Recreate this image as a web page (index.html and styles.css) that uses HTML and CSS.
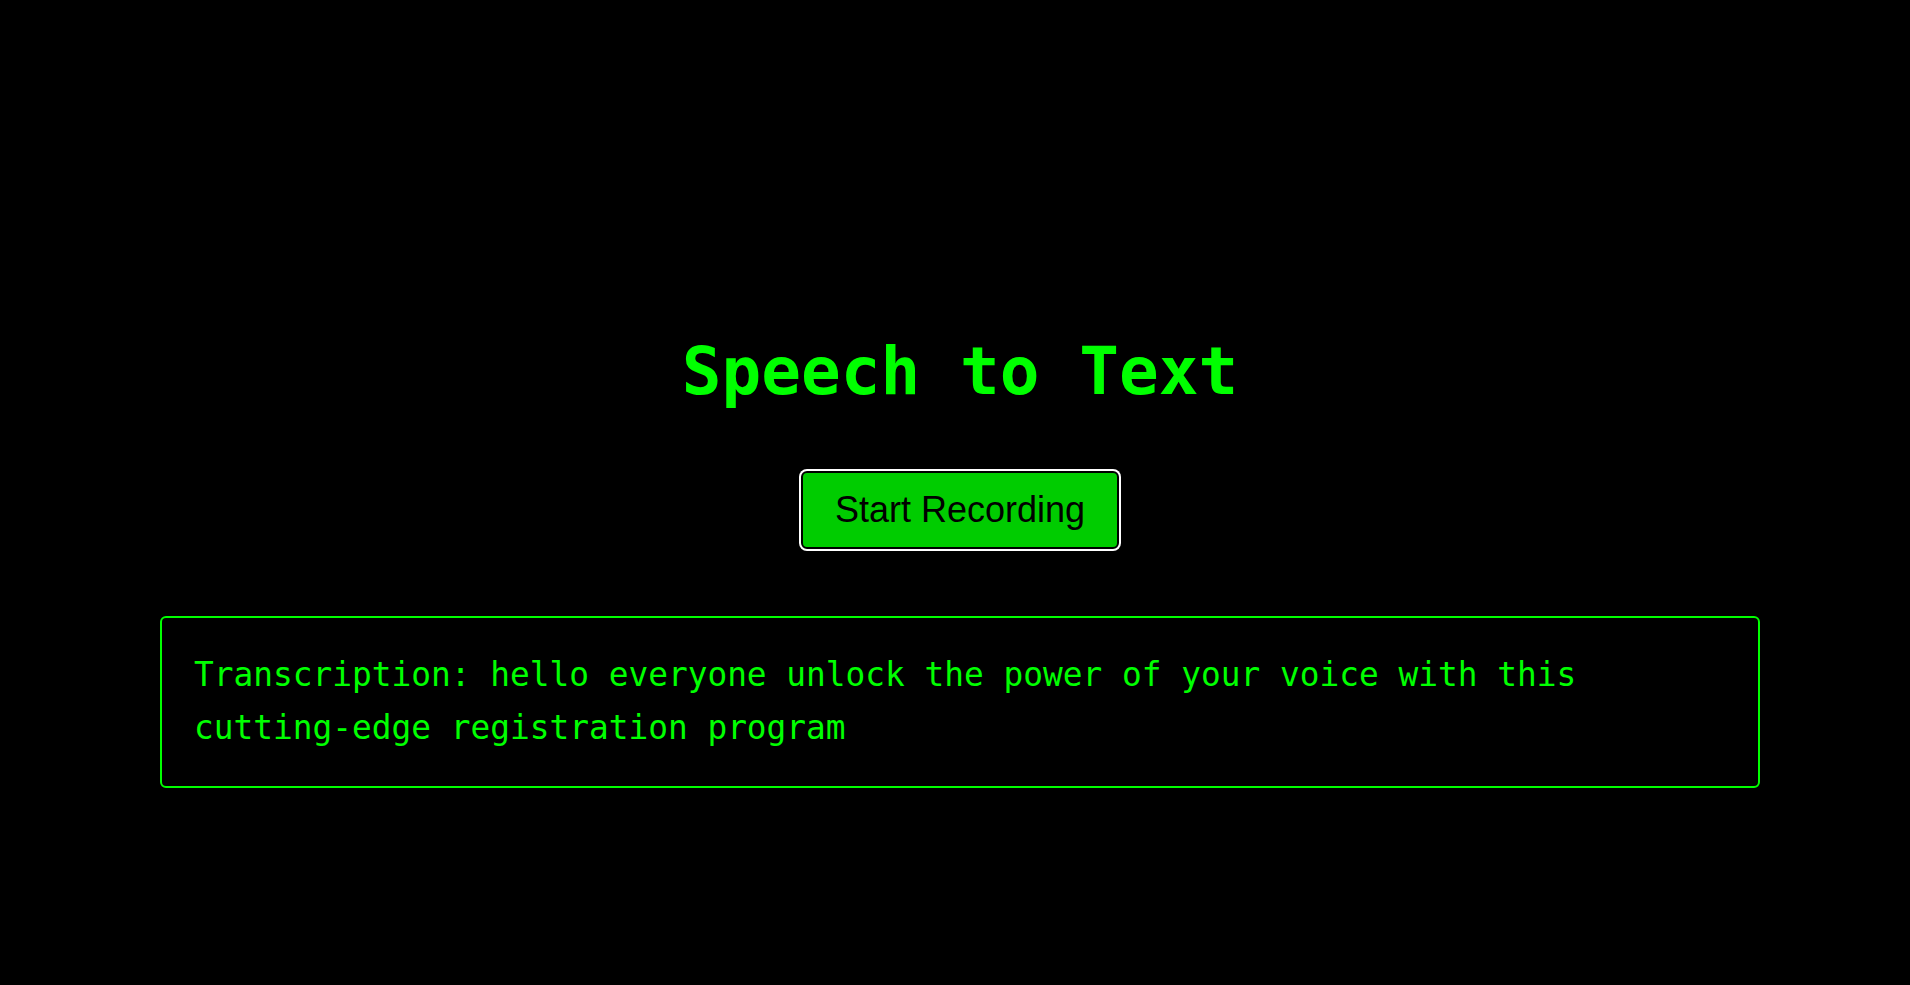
FILE: index.html
```html
<!DOCTYPE html>
<html lang="en">
<head>
<meta charset="utf-8">
<title>Speech to Text</title>
<link rel="stylesheet" href="styles.css">
</head>
<body>
<main class="app">
  <h1 class="title">Speech to Text</h1>
  <button class="record-btn" type="button">Start Recording</button>
  <div class="transcript">Transcription: hello everyone unlock the power of your voice with this cutting-edge registration program</div>
</main>
</body>
</html>
```
FILE: styles.css
```css
html, body {
  margin: 0;
  padding: 0;
  background: #000;
}

body {
  width: 1910px;
  height: 985px;
  overflow: hidden;
}

.app {
  display: flex;
  flex-direction: column;
  align-items: center;
  padding: 333px 0 0 10px;
  box-sizing: border-box;
}

.title {
  margin: 0;
  font-family: "DejaVu Sans Mono", monospace;
  font-weight: bold;
  font-size: 66px;
  line-height: normal;
  color: #00ff00;
}

.record-btn {
  margin-top: 61px;
  padding: 17px 32px;
  font-family: "Liberation Sans", Arial, sans-serif;
  font-size: 36px;
  line-height: 40px;
  color: #000;
  background: #00cc00;
  border: 2px solid #000;
  border-radius: 6px;
  box-shadow: 0 0 0 2px #fff;
  cursor: pointer;
}

.transcript {
  margin-top: 67px;
  width: 1600px;
  box-sizing: border-box;
  padding: 31px 32px;
  border: 2px solid #00ff00;
  border-radius: 6px;
  font-family: "DejaVu Sans Mono", monospace;
  font-size: 32.8px;
  line-height: 53px;
  color: #00ff00;
}
```
